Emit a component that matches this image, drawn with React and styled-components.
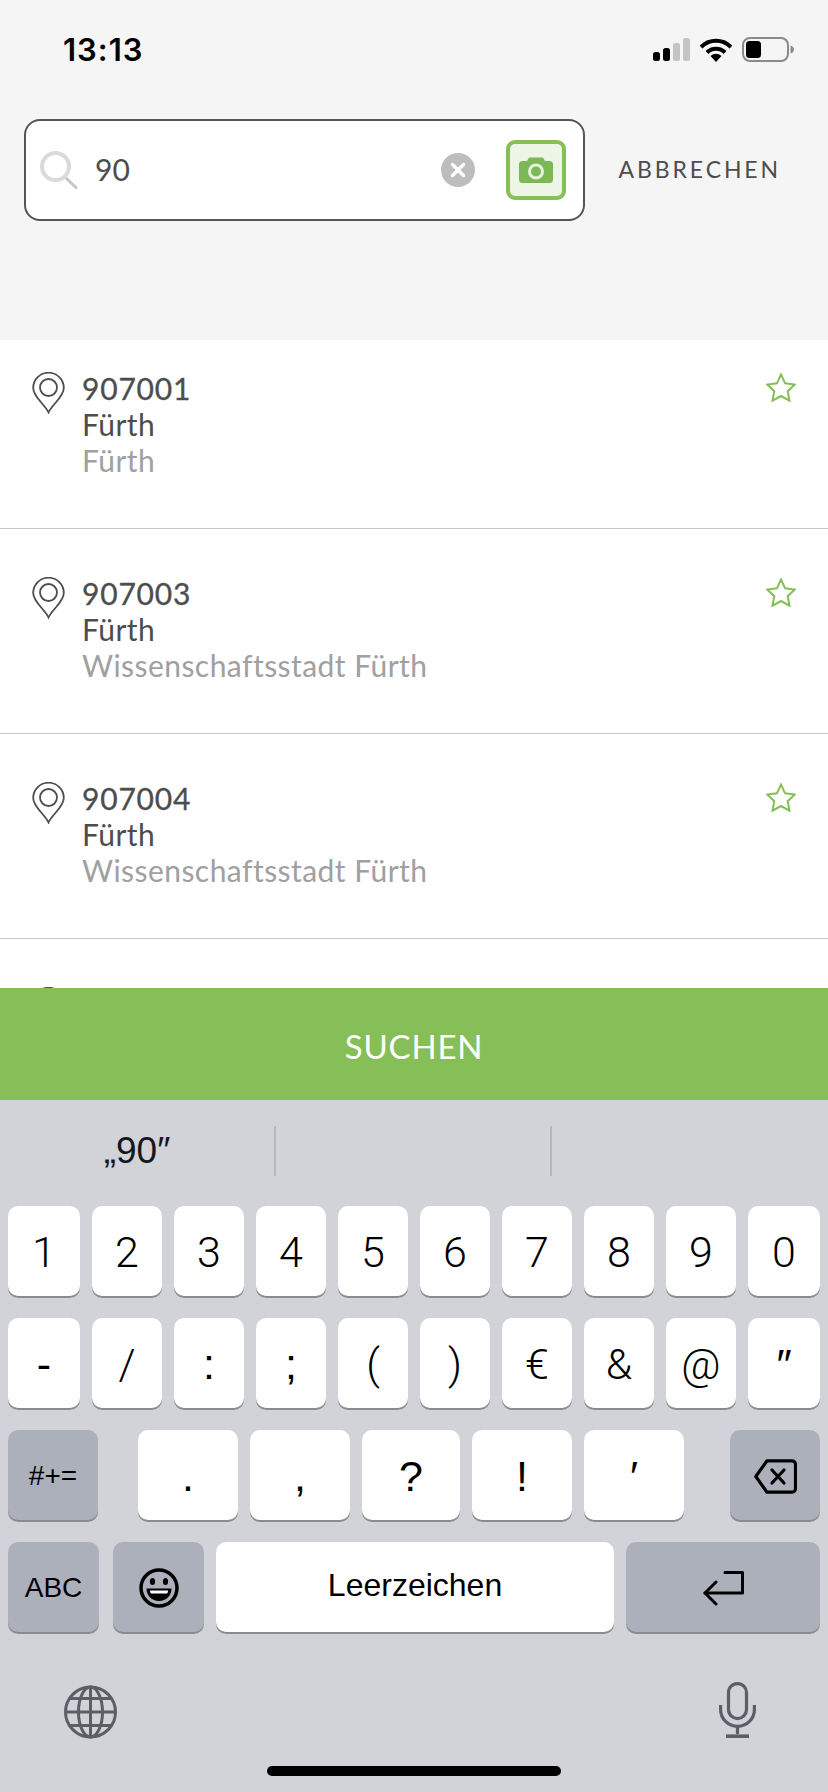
import React from 'react';
import styled, { createGlobalStyle } from 'styled-components';

const GREEN = '#86bf58';
const TEXT = '#4d4d4d';
const MUTED = '#a0a0a0';

const GlobalStyle = createGlobalStyle`
  html, body { margin: 0; padding: 0; background: #fff; }
  * { box-sizing: border-box; }
`;

const Page = styled.div`
  width: 828px;
  height: 1792px;
  display: flex;
  flex-direction: column;
  overflow: hidden;
  font-family: Lato, "Liberation Sans", sans-serif;
`;

const Header = styled.header`
  height: 340px;
  flex: none;
  background: #f5f5f5;
  padding-top: 34px;
`;

const StatusBar = styled.div`
  height: 31px;
  padding: 0 34px 0 63px;
  display: flex;
  align-items: center;
  justify-content: space-between;
`;

const Time = styled.span`
  font-family: Inter, "Liberation Sans", sans-serif;
  font-weight: 600;
  font-size: 31px;
  letter-spacing: 1px;
  color: #000;
`;

const StatusIcons = styled.div`
  display: flex;
  align-items: center;
  gap: 10px;
  svg { display: block; }
`;

const SearchRow = styled.div`
  margin-top: 54px;
  padding: 0 47px 0 24px;
  display: flex;
  align-items: center;
  justify-content: space-between;
`;

const SearchBox = styled.div`
  width: 561px;
  height: 102px;
  background: #fff;
  border: 2px solid #555;
  border-radius: 16px;
  padding: 0 17px 0 14px;
  display: flex;
  align-items: center;
`;

const SearchValue = styled.span`
  flex: 1;
  margin-left: 17px;
  padding-bottom: 2px;
  font-size: 30px;
  color: ${TEXT};
`;

const ClearButton = styled.span`
  display: flex;
  margin-right: 31px;
`;

const CameraButton = styled.span`
  width: 60px;
  height: 60px;
  background: #edf5e6;
  border: 4px solid ${GREEN};
  border-radius: 9px;
  display: flex;
  align-items: center;
  justify-content: center;
`;

const CancelLabel = styled.span`
  font-size: 23px;
  letter-spacing: 2.9px;
  padding-bottom: 2px;
  color: ${TEXT};
`;

const List = styled.div`
  height: 648px;
  flex: none;
  background: #fff;
  overflow: hidden;
`;

const Row = styled.div`
  height: 205px;
  border-bottom: 1px solid #c8c8c8;
  padding: 48px 32px 0 32px;
  display: flex;
  align-items: flex-start;
  &:first-child {
    height: 189px;
    padding-top: 32px;
  }
`;

const RowText = styled.div`
  flex: 1;
  margin-left: 17px;
  margin-top: -2px;
  min-height: 1px;
`;

const RowLine = styled.div`
  font-size: 30px;
  line-height: 36px;
  letter-spacing: ${p => p.$code ? '0.8px' : '0.45px'};
  color: ${p => p.$muted ? MUTED : TEXT};
  -webkit-text-stroke: ${p => p.$code ? '0.3px' : '0'};
`;

const StarWrap = styled.span`
  display: flex;
  margin-top: 1px;
`;

const SearchButton = styled.div`
  height: 112px;
  flex: none;
  background: ${GREEN};
  color: #fff;
  font-size: 33px;
  letter-spacing: 0.8px;
  padding-top: 3px;
  display: flex;
  align-items: center;
  justify-content: center;
`;

const Keyboard = styled.div`
  flex: 1;
  background: #d1d3d9;
  padding: 0 8px;
  font-family: Roboto, "Liberation Sans", Arial, sans-serif;
  font-weight: 300;
  color: #000;
`;

const Suggestions = styled.div`
  height: 106px;
  margin: 0 -8px;
  padding: 26px 0 30px;
  display: grid;
  grid-template-columns: 276px 276px 1fr;
`;

const Suggestion = styled.div`
  font-family: "Liberation Sans", Arial, sans-serif;
  font-weight: 400;
  font-size: 37px;
  display: flex;
  align-items: center;
  justify-content: center;
  padding-bottom: 1px;
  color: #16171a;
  &:not(:last-child) { border-right: 2px solid #b6b8be; }
`;

const KeyRows = styled.div`
  display: flex;
  flex-direction: column;
  gap: 22px;
`;

const NumberRow = styled.div`
  display: grid;
  grid-template-columns: 72px repeat(8, 70px) 1fr;
  column-gap: 12px;
`;

const SplitRow = styled.div`
  display: flex;
  justify-content: space-between;
`;

const MiddleKeys = styled.div`
  display: flex;
  gap: 12px;
  margin-right: 6px;
`;

const BottomRow = styled.div`
  display: flex;
  gap: 12px;
`;

const Key = styled.div`
  height: 90px;
  width: ${p => p.$w ? p.$w + 'px' : 'auto'};
  flex: ${p => p.$grow ? 1 : 'none'};
  background: ${p => p.$dark ? '#acb0bb' : '#fff'};
  border-radius: 10px;
  box-shadow: 0 2px 0 #8a8b8e;
  display: flex;
  align-items: center;
  justify-content: center;
  font-size: ${p => p.$size || 43}px;
  padding-top: 2px;
`;

const EmojiKey = styled(Key)`
  margin-left: 2px;
`;

const LabelKey = styled(Key)`
  font-family: "Liberation Sans", Arial, sans-serif;
  font-weight: 400;
`;

const SpaceKey = styled(LabelKey)`
  padding: 0 0 3px;
`;

const KeyboardFooter = styled.div`
  margin-top: 50px;
  padding: 0 64px 0 56px;
  display: flex;
  align-items: flex-start;
  justify-content: space-between;
  svg { display: block; }
  svg:first-child { margin-top: 3px; }
`;

const HomeBar = styled.div`
  width: 294px;
  height: 10px;
  margin: 27px auto 0;
  background: #000;
  border-radius: 5px;
`;

const Signal = () => (
  <svg width="37" height="23" viewBox="0 0 37 23">
    <rect x="0" y="14" width="7" height="9" rx="2.5" fill="#000" />
    <rect x="10" y="10" width="7" height="13" rx="2.5" fill="#000" />
    <rect x="20" y="5" width="7" height="18" rx="2.5" fill="#c4c4c4" />
    <rect x="30" y="0" width="7" height="23" rx="2.5" fill="#c4c4c4" />
  </svg>
);

const Wifi = () => (
  <svg width="32" height="24" viewBox="0 0 32 24" fill="none" stroke="#000" strokeWidth="4">
    <path d="M1 9A21 21 0 0 1 31 9" />
    <path d="M7 14.5A12.5 12.5 0 0 1 25 14.5" />
    <path d="M16 24L10.5 18A8 8 0 0 1 21.5 18Z" fill="#000" stroke="none" />
  </svg>
);

const Battery = () => (
  <svg width="52" height="25" viewBox="0 0 52 25">
    <rect x="1" y="1" width="45" height="23" rx="7" fill="none" stroke="#8a8a8a" strokeWidth="2" />
    <rect x="4" y="4" width="15" height="17" rx="3.5" fill="#000" />
    <path d="M48.5 8.5C51 9.5 52 11 52 12.5C52 14 51 15.5 48.5 16.5Z" fill="#8a8a8a" />
  </svg>
);

const SearchIcon = () => (
  <svg width="38" height="38" viewBox="0 0 38 38" fill="none">
    <circle cx="15.5" cy="15.5" r="13.5" stroke="#dadada" strokeWidth="4" />
    <path d="M26 27L37 37.5" stroke="#c6c6c6" strokeWidth="3" />
  </svg>
);

const ClearIcon = () => (
  <svg width="34" height="34" viewBox="0 0 34 34">
    <circle cx="17" cy="17" r="17" fill="#bdbdbd" />
    <path d="M11.5 11.5L22.5 22.5M22.5 11.5L11.5 22.5" stroke="#fff" strokeWidth="3.5" strokeLinecap="round" />
  </svg>
);

const CameraIcon = () => (
  <svg width="34" height="26" viewBox="0 0 34 26">
    <path d="M3.5 4H8L10 0.5H24L26 4H30.5A3.5 3.5 0 0 1 34 7.5V22.5A3.5 3.5 0 0 1 30.5 26H3.5A3.5 3.5 0 0 1 0 22.5V7.5A3.5 3.5 0 0 1 3.5 4Z" fill="#7cb956" />
    <circle cx="17" cy="14.5" r="6.5" fill="#7cb956" stroke="#e6f2dc" strokeWidth="3" />
  </svg>
);

const PinIcon = () => (
  <svg width="33" height="42" viewBox="0 0 33 42" fill="none" stroke={TEXT} strokeWidth="1.8">
    <path d="M16.5 40.5C13 32.5 1.2 25 1.2 16A15.3 15.3 0 0 1 31.8 16C31.8 25 20 32.5 16.5 40.5Z" />
    <circle cx="16.5" cy="15.5" r="8.5" />
  </svg>
);

const StarIcon = () => (
  <svg width="30" height="29" viewBox="0 0 30 29" fill="none" stroke={GREEN} strokeWidth="2">
    <polygon points="15,1.5 19.1,10.3 28.8,11.5 21.7,18.2 23.5,27.7 15,23 6.5,27.7 8.3,18.2 1.2,11.5 10.9,10.3" />
  </svg>
);

const BackspaceIcon = () => (
  <svg width="43" height="35" viewBox="0 0 43 35" fill="none" stroke="#000" strokeWidth="3.2" strokeLinejoin="round" strokeLinecap="round">
    <path d="M13 1.8H38A3.5 3.5 0 0 1 41.5 5.3V29.7A3.5 3.5 0 0 1 38 33.2H13L1.8 17.5Z" />
    <path d="M18 11L30 24M30 11L18 24" />
  </svg>
);

const ReturnIcon = () => (
  <svg width="41" height="35" viewBox="0 0 41 35" fill="none" stroke="#000" strokeWidth="3" strokeLinecap="round" strokeLinejoin="round">
    <path d="M22 1.5H39.5V22H2" />
    <path d="M13 11L2 22L13 33" />
  </svg>
);

const EmojiIcon = () => (
  <svg width="40" height="40" viewBox="0 0 40 40">
    <circle cx="20" cy="20" r="18" fill="none" stroke="#000" strokeWidth="3.5" />
    <ellipse cx="13.5" cy="13.5" rx="2.6" ry="3.6" fill="#000" />
    <ellipse cx="26.5" cy="13.5" rx="2.6" ry="3.6" fill="#000" />
    <path d="M7.5 20.5H32.5C32.5 28 27 33 20 33C13 33 7.5 28 7.5 20.5Z" fill="#000" />
    <path d="M11 22.5H29C29 24 28.5 25 28 25.5H12C11.5 25 11 24 11 22.5Z" fill="#fff" />
  </svg>
);

const GlobeIcon = () => (
  <svg width="53" height="54" viewBox="0 0 53 54" fill="none" stroke="#5c5e64" strokeWidth="3">
    <circle cx="26.5" cy="27" r="25" />
    <ellipse cx="26.5" cy="27" rx="12" ry="25" />
    <path d="M26.5 2V52M1.5 27H51.5M5.5 13.5H47.5M5.5 40.5H47.5" />
  </svg>
);

const MicIcon = () => (
  <svg width="37" height="56" viewBox="0 0 37 56" fill="none" stroke="#5c5e64" strokeWidth="3.2">
    <rect x="9.5" y="1.6" width="18" height="35" rx="9" />
    <path d="M1.6 23V27.5A16.9 16.9 0 0 0 35.4 27.5V23" />
    <path d="M18.5 44.5V52" />
    <path d="M7 54.2H30" strokeWidth="3.6" />
  </svg>
);

// last row is scrolled behind the button, only the top of its icons shows
const stations = [
  { id: 1, code: '907001', city: 'Fürth', area: 'Fürth' },
  { id: 3, code: '907003', city: 'Fürth', area: 'Wissenschaftsstadt Fürth' },
  { id: 4, code: '907004', city: 'Fürth', area: 'Wissenschaftsstadt Fürth' },
  { id: 5 },
];

const numbers = ['1', '2', '3', '4', '5', '6', '7', '8', '9', '0'];
const thinSymbols = ['/', '(', ')', '€', '&', '@'];
const symbols = ['-', '/', ':', ';', '(', ')', '€', '&', '@', '″'];
const punctuation = [
  { label: '.', w: 100 },
  { label: ',', w: 100 },
  { label: '?', w: 98 },
  { label: '!', w: 100 },
  { label: '′', w: 100 },
];

const App = () => {
  return (
    <Page>
      <GlobalStyle />
      <Header>
        <StatusBar>
          <Time>13:13</Time>
          <StatusIcons>
            <Signal />
            <Wifi />
            <Battery />
          </StatusIcons>
        </StatusBar>
        <SearchRow>
          <SearchBox>
            <SearchIcon />
            <SearchValue>90</SearchValue>
            <ClearButton><ClearIcon /></ClearButton>
            <CameraButton><CameraIcon /></CameraButton>
          </SearchBox>
          <CancelLabel>ABBRECHEN</CancelLabel>
        </SearchRow>
      </Header>

      <List>
        {stations.map(item => (
          <Row key={item.id}>
            <PinIcon />
            <RowText>
              {item.code && <RowLine $code>{item.code}</RowLine>}
              {item.city && <RowLine>{item.city}</RowLine>}
              {item.area && <RowLine $muted>{item.area}</RowLine>}
            </RowText>
            <StarWrap><StarIcon /></StarWrap>
          </Row>
        ))}
      </List>

      <SearchButton>SUCHEN</SearchButton>

      <Keyboard>
        <Suggestions>
          <Suggestion>„90″</Suggestion>
          <Suggestion />
          <Suggestion />
        </Suggestions>
        <KeyRows>
          <NumberRow>
            {numbers.map(k => <Key key={k}>{k}</Key>)}
          </NumberRow>
          <NumberRow>
            {symbols.map(k => thinSymbols.includes(k)
              ? <Key key={k}>{k}</Key>
              : <LabelKey key={k}>{k}</LabelKey>)}
          </NumberRow>
          <SplitRow>
            <LabelKey $dark $w={90} $size={28}>#+=</LabelKey>
            <MiddleKeys>
              {punctuation.map(k => <LabelKey key={k.label} $w={k.w}>{k.label}</LabelKey>)}
            </MiddleKeys>
            <Key $dark $w={90}><BackspaceIcon /></Key>
          </SplitRow>
          <BottomRow>
            <LabelKey $dark $w={91} $size={28}>ABC</LabelKey>
            <EmojiKey $dark $w={91}><EmojiIcon /></EmojiKey>
            <SpaceKey $grow $size={32}>Leerzeichen</SpaceKey>
            <Key $dark $w={194}><ReturnIcon /></Key>
          </BottomRow>
        </KeyRows>
        <KeyboardFooter>
          <GlobeIcon />
          <MicIcon />
        </KeyboardFooter>
        <HomeBar />
      </Keyboard>
    </Page>
  );
};

export default App;
